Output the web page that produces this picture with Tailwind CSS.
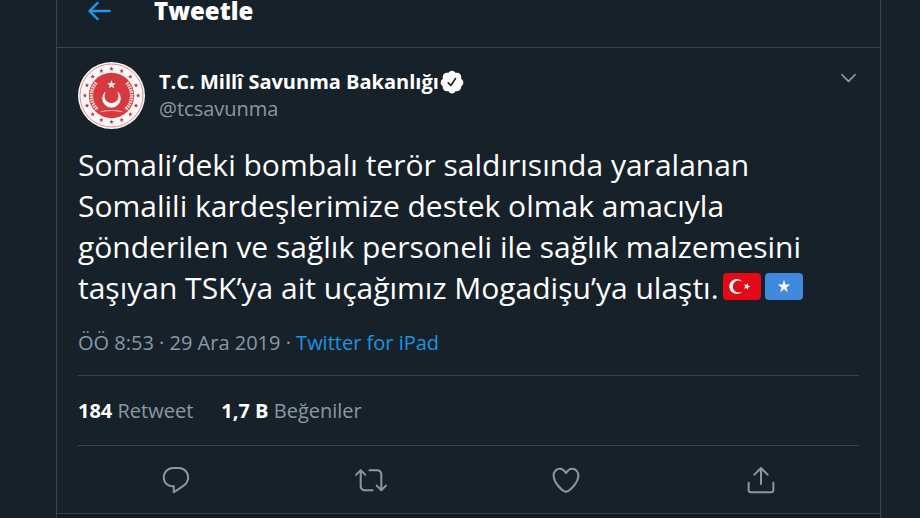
<!DOCTYPE html>
<html lang="tr">
<head>
<meta charset="utf-8">
<meta name="viewport" content="width=device-width, initial-scale=1">
<title>Tweetle</title>
<script src="https://cdn.jsdelivr.net/npm/@tailwindcss/browser@4"></script>
</head>
<body class="bg-[#17212a] font-['Open_Sans','Noto_Sans',sans-serif] text-white overflow-hidden">
<main class="ml-14 mr-[39px] min-h-screen border-x border-[#38444d]">
  <header class="-mt-[26px] flex h-[74px] items-center gap-[39px] border-b border-[#38444d] pl-[26px]">
    <button type="button" aria-label="Geri" class="text-[#1d9bf0]">
      <svg class="size-8" viewBox="0 0 24 24" fill="currentColor"><path d="M20 11.100H6.900l4.700-4.600c.35-.35.350-.9 0-1.250s-.9-.35-1.250 0l-6.100 6.100c-.35.350-.35.900 0 1.250l6.100 6.100c.35.350.9.350 1.250 0s.35-.9 0-1.250L6.900 12.900H20c.500 0 .9-.4.9-.9s-.4-.9-.9-.9z"/></svg>
    </button>
    <h1 class="text-[24px] font-extrabold leading-5">Tweetle</h1>
  </header>

  <article class="px-[21px] pt-[14px]">
    <div class="flex items-start gap-[14px]">
      <svg class="size-[67px] shrink-0" viewBox="0 0 68 68" role="img" aria-label="T.C. Millî Savunma Bakanlığı">
        <defs><path id="star" d="M0-2.400L.6-.8 2.300-.75.95.3 1.400 1.950 0 1-1.400 1.950-.95.3-2.300-.75-.6-.8z"/></defs>
        <circle cx="34" cy="34" r="34" fill="#fdf8f7"/>
        <circle cx="34" cy="34" r="32" fill="none" stroke="#e08a8a" stroke-width="1"/>
        <circle cx="34" cy="34" r="23" fill="#d63a3e"/>
        <g fill="#b8323c">
          <use href="#star" transform="translate(34 7)"/><use href="#star" transform="translate(44.300 9.100)"/><use href="#star" transform="translate(53.100 14.900)"/><use href="#star" transform="translate(58.900 23.700)"/>
          <use href="#star" transform="translate(61 34)"/><use href="#star" transform="translate(58.900 44.300)"/><use href="#star" transform="translate(53.100 53.100)"/><use href="#star" transform="translate(44.300 58.900)"/>
          <use href="#star" transform="translate(34 61)"/><use href="#star" transform="translate(23.700 58.900)"/><use href="#star" transform="translate(14.900 53.100)"/><use href="#star" transform="translate(9.100 44.300)"/>
          <use href="#star" transform="translate(7 34)"/><use href="#star" transform="translate(9.100 23.700)"/><use href="#star" transform="translate(14.900 14.900)"/><use href="#star" transform="translate(23.700 9.100)"/>
        </g>
        <g fill="none" stroke="#f8dcda" stroke-width="3.500" stroke-dasharray="1.600 .9">
          <path d="M18.500 21C11.500 29 12 41 20 48.500"/><path d="M49.500 21C56.500 29 56 41 48 48.500"/>
        </g>
        <path d="M23 50.500Q34 48 45 50.500" fill="none" stroke="#f0b9b7" stroke-width="1.200"/>
        <path d="M27.500 30.800A9 9 0 1 0 40.500 30.800A7.500 7.500 0 1 1 27.500 30.800z" fill="#fff" stroke="#fff" stroke-width=".8"/>
        <use href="#star" transform="translate(34 23) scale(1.900)" fill="#fff"/>
      </svg>
      <div class="min-w-0 flex-1 pt-[6px]">
        <div class="flex items-center">
          <a href="#" class="text-[20px] font-bold leading-[27px]">T.C. Millî Savunma Bakanlığı</a>
          <svg class="size-[26px] shrink-0" viewBox="0 0 24 24" fill="currentColor" role="img" aria-label="Onaylanmış hesap"><path d="M22.500 12.500c0-1.580-.875-2.950-2.148-3.600.154-.435.238-.905.238-1.400 0-2.210-1.710-3.998-3.818-3.998-.47 0-.92.084-1.336.25C14.818 2.415 13.510 1.500 12 1.500s-2.816.917-3.437 2.250c-.415-.165-.866-.25-1.336-.25-2.110 0-3.818 1.790-3.818 4 0 .494.083.964.237 1.400-1.272.65-2.147 2.018-2.147 3.600 0 1.495.782 2.798 1.942 3.486-.02.17-.032.34-.032.514 0 2.210 1.708 4 3.818 4 .47 0 .92-.086 1.335-.25.62 1.334 1.926 2.250 3.437 2.250 1.512 0 2.818-.916 3.437-2.250.415.163.865.248 1.336.248 2.110 0 3.818-1.790 3.818-4 0-.174-.012-.344-.033-.513 1.158-.687 1.943-1.990 1.943-3.484zm-6.616-3.334l-4.334 6.500c-.145.217-.382.334-.625.334-.143 0-.288-.04-.416-.126l-.115-.094-2.415-2.415c-.293-.293-.293-.768 0-1.060s.768-.294 1.060 0l1.770 1.767 3.825-5.740c.23-.345.696-.436 1.040-.207.346.23.44.696.21 1.040z"/></svg>
        </div>
        <a href="#" class="block text-[20px] leading-[27px] text-[#8899a6]">@tcsavunma</a>
      </div>
      <button type="button" aria-label="Diğer" class="mt-[5px] text-[#8899a6]">
        <svg class="size-[21px]" viewBox="0 0 24 24" fill="currentColor"><path d="M20.207 8.147c-.39-.39-1.023-.39-1.414 0L12 14.940 5.207 8.147c-.39-.39-1.023-.39-1.414 0-.39.39-.39 1.023 0 1.414l7.500 7.500c.195.196.45.294.707.294s.512-.098.707-.294l7.500-7.500c.39-.39.39-1.022 0-1.413z"/></svg>
      </button>
    </div>

    <p class="mt-[15px] text-[30px] leading-[41px]">Somali’deki bombalı terör saldırısında yaralanan Somalili kardeşlerimize destek olmak amacıyla gönderilen ve sağlık personeli ile sağlık malzemesini taşıyan TSK’ya ait uçağımız Mogadişu’ya ulaştı.<span class="ml-1 inline-flex gap-1 align-[-1px]"><svg class="h-[27px] w-[38px]" viewBox="0 0 38 27" role="img" aria-label="Türkiye"><rect width="38" height="27" rx="4" fill="#e30917"/><path d="M19.800 18A7.500 7.500 0 1 1 19.800 9A6 6 0 1 0 19.800 18z" fill="#fff"/><path d="M27.500 13.500l-2.500.9v2.600l-1.600-2-2.500.7L22.400 13.500l-1.500-2.200 2.500.7 1.600-2v2.600z" fill="#fff"/></svg><svg class="h-[27px] w-[38px]" viewBox="0 0 38 27" role="img" aria-label="Somali"><rect width="38" height="27" rx="4" fill="#4189dd"/><path d="M19 7l1.500 4.600h4.700l-3.800 2.800 1.500 4.600-3.900-2.800-3.900 2.800 1.500-4.600-3.800-2.800h4.700z" fill="#fff"/></svg></span></p>

    <div class="mt-[21px] text-[20px] leading-[28px] text-[#8899a6]">ÖÖ 8:53 · 29 Ara 2019 · <a href="#" class="text-[#1b95e0]">Twitter for iPad</a></div>

    <div class="mt-[18px] flex gap-7 border-y border-[#38444d] py-[21px] text-[20px] leading-[27px] text-[#8899a6]">
      <a href="#"><span class="font-bold text-white">184</span> Retweet</a>
      <a href="#"><span class="font-bold text-white">1,7 B</span> Beğeniler</a>
    </div>

    <div class="grid h-[67px] grid-cols-4 place-items-center text-[#8899a6]">
      <button type="button" aria-label="Yanıtla"><svg class="size-8" viewBox="0 0 24 24" fill="currentColor"><path d="M14.046 2.242l-4.148-.01h-.002c-4.374 0-7.800 3.427-7.800 7.802 0 4.098 3.186 7.206 7.465 7.370v3.828c0 .108.044.286.12.403.142.225.384.347.632.347.138 0 .277-.038.402-.118.264-.168 6.473-4.140 8.088-5.506 1.902-1.610 3.040-3.970 3.043-6.312v-.017c-.006-4.367-3.430-7.787-7.800-7.788zm3.787 12.972c-1.134.96-4.862 3.405-6.772 4.643V16.670c0-.414-.335-.75-.75-.75h-.396c-3.660 0-6.318-2.476-6.318-5.886 0-3.534 2.768-6.302 6.300-6.302l4.147.01h.002c3.532 0 6.300 2.766 6.302 6.296-.003 1.910-.942 3.844-2.514 5.176z"/></svg></button>
      <button type="button" aria-label="Retweetle"><svg class="size-8" viewBox="0 0 24 24" fill="currentColor"><path d="M23.770 15.670c-.292-.293-.767-.293-1.060 0l-2.220 2.220V7.650c0-2.068-1.683-3.750-3.750-3.750h-5.850c-.414 0-.75.336-.75.75s.336.75.75.75h5.850c1.240 0 2.250 1.010 2.250 2.250v10.240l-2.220-2.220c-.293-.293-.768-.293-1.060 0s-.294.768 0 1.060l3.500 3.500c.145.147.337.22.53.22s.383-.072.53-.22l3.500-3.500c.294-.292.294-.767 0-1.060zm-10.660 3.280H7.260c-1.240 0-2.250-1.010-2.250-2.250V6.460l2.220 2.220c.148.147.34.22.532.22s.384-.073.53-.22c.293-.293.293-.768 0-1.060l-3.500-3.500c-.293-.294-.768-.294-1.060 0l-3.500 3.500c-.294.292-.294.767 0 1.060s.767.293 1.060 0l2.220-2.220V16.700c0 2.068 1.683 3.750 3.750 3.750h5.850c.414 0 .75-.336.75-.75s-.337-.75-.75-.75z"/></svg></button>
      <button type="button" aria-label="Beğen"><svg class="size-8" viewBox="0 0 24 24" fill="currentColor"><path d="M12 21.638h-.014C9.403 21.590 1.950 14.856 1.950 8.478c0-3.064 2.525-5.754 5.403-5.754 2.290 0 3.830 1.580 4.646 2.730.814-1.148 2.354-2.730 4.645-2.730 2.880 0 5.404 2.690 5.404 5.755 0 6.376-7.454 13.110-10.037 13.157H12zM7.354 4.225c-2.080 0-3.903 1.988-3.903 4.255 0 5.740 7.034 11.596 8.550 11.658 1.518-.062 8.550-5.917 8.550-11.658 0-2.267-1.823-4.255-3.903-4.255-2.528 0-3.940 2.936-3.952 2.965-.23.562-1.156.562-1.387 0-.014-.03-1.425-2.965-3.954-2.965z"/></svg></button>
      <button type="button" aria-label="Paylaş"><svg class="size-8" viewBox="0 0 24 24" fill="currentColor"><path d="M17.530 7.470l-5-5c-.293-.293-.768-.293-1.060 0l-5 5c-.294.293-.294.768 0 1.060s.767.294 1.060 0l3.720-3.720V15c0 .414.336.75.75.75s.75-.336.75-.75V4.810l3.720 3.720c.146.147.338.22.53.22s.384-.072.53-.22c.293-.293.293-.767 0-1.060z"/><path d="M19.708 21.944H4.292C3.028 21.944 2 20.916 2 19.652V14c0-.414.336-.75.75-.75s.75.336.75.75v5.652c0 .437.355.792.792.792h15.416c.437 0 .792-.355.792-.792V14c0-.414.336-.75.75-.75s.75.336.75.75v5.652c0 1.264-1.028 2.292-2.292 2.292z"/></svg></button>
    </div>
  </article>
  <div class="h-3 border-t border-[#38444d] bg-[#121a22]"></div>
</main>
</body>
</html>
